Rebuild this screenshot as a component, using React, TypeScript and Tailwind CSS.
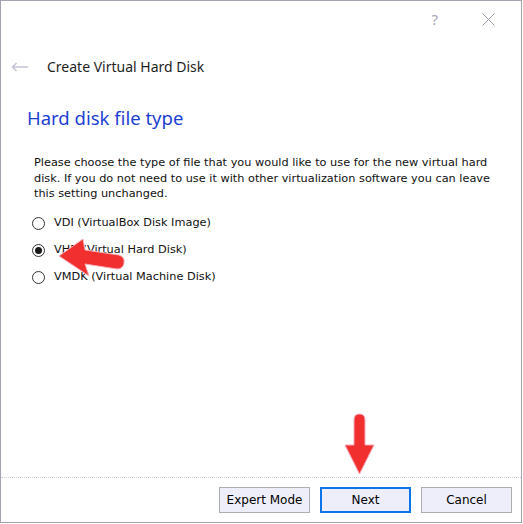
import { useState } from 'react'

const body = { fontFamily: '"DejaVu Sans", Tahoma, sans-serif' }
const ui = { fontFamily: '"Noto Sans", "Segoe UI", sans-serif' }

const options = [
  { id: 'vdi', label: 'VDI (VirtualBox Disk Image)' },
  { id: 'vhd', label: 'VHD (Virtual Hard Disk)' },
  { id: 'vmdk', label: 'VMDK (Virtual Machine Disk)' },
]

function Radio({ checked }: { checked: boolean }) {
  return (
    <span className="flex h-[13px] w-[13px] items-center justify-center rounded-full border border-[#333] bg-white">
      {checked && <span className="h-[7px] w-[7px] rounded-full bg-[#1a1a1a]" />}
    </span>
  )
}

function WizardButton({ children, primary = false }: { children: string; primary?: boolean }) {
  return (
    <button
      type="button"
      className={`h-[26px] w-[91px] bg-[#eeeefb] text-[12px] text-black ${
        primary ? 'border-2 border-[#0a74e8]' : 'border border-[#adadad]'
      }`}
      style={body}
    >
      {children}
    </button>
  )
}

export default function App() {
  const [type, setType] = useState('vhd')

  return (
    <div className="h-[524px] w-[523px] bg-white">
      <div className="relative flex h-[523px] w-[522px] flex-col border border-[#a3a3b4]">
        {/* title bar */}
        <div className="flex h-[37px] items-center justify-end gap-[44px] pr-[25px] text-[#a8a8b8]" style={ui}>
          <span className="text-[15px] leading-none">?</span>
          <svg width="13" height="13" viewBox="0 0 13 13" className="mr-[1px]">
            <path d="M0.5 0.5 L12.5 12.5 M12.5 0.5 L0.5 12.5" stroke="#9a9ab0" strokeWidth="1" />
          </svg>
        </div>

        <div className="mt-[18px] flex items-center pl-[10px]">
          <svg width="18" height="10" viewBox="0 0 18 10">
            <path d="M17 5 H2 M5.5 1 L1.5 5 L5.5 9" fill="none" stroke="#c4c4d8" strokeWidth="1.5" />
          </svg>
          <span className="ml-[18px] text-[14px] text-[#1e1e1e]" style={ui}>
            Create Virtual Hard Disk
          </span>
        </div>

        <h1 className="mt-[27px] pl-[26px] text-[18.5px] leading-[28px] text-[#1b3fd3]" style={ui}>
          Hard disk file type
        </h1>

        <p className="mt-[23px] pl-[33px] pr-[20px] text-[11.3px] leading-[15.5px] text-[#111]" style={body}>
          Please choose the type of file that you would like to use for the new virtual hard disk. If you do not need
          to use it with other virtualization software you can leave this setting unchanged.
        </p>

        <div className="mt-[13px] flex flex-col gap-[9px] pl-[31px]">
          {options.map((o) => (
            <label
              key={o.id}
              className="flex h-[18px] cursor-default items-center gap-[9px] text-[11.3px] text-[#111]"
              style={body}
              onClick={() => setType(o.id)}
            >
              <Radio checked={type === o.id} />
              {o.label}
            </label>
          ))}
        </div>

        <div className="flex-1" />

        <div className="border-t border-dotted border-[#c8c8e0]" />
        <div className="flex justify-end gap-[10px] pt-[9px] pb-[9px] pr-[9px]">
          <WizardButton>Expert Mode</WizardButton>
          <WizardButton primary>Next</WizardButton>
          <WizardButton>Cancel</WizardButton>
        </div>

        {/* annotation arrows */}
        <svg className="absolute left-[50px] top-[232px]" width="80" height="45" viewBox="0 0 80 45">
          <path
            d="M8 23 L32 6 L34 17 L68 22 Q74 24 73 30 Q72 36 66 36 L34 31 L38 43 Z"
            fill="#f22f2f"
            stroke="#f8b0b8"
            strokeWidth="1"
          />
        </svg>
        <svg className="absolute left-[342px] top-[411px]" width="34" height="66" viewBox="0 0 34 66">
          <path
            d="M11 8 Q11 2 16.5 2 Q22 2 22 8 L22 33 L31 33 L16.5 62 L2 33 L11 33 Z"
            fill="#f22f2f"
            stroke="#f4a8b8"
            strokeWidth="1"
          />
        </svg>
      </div>
    </div>
  )
}
